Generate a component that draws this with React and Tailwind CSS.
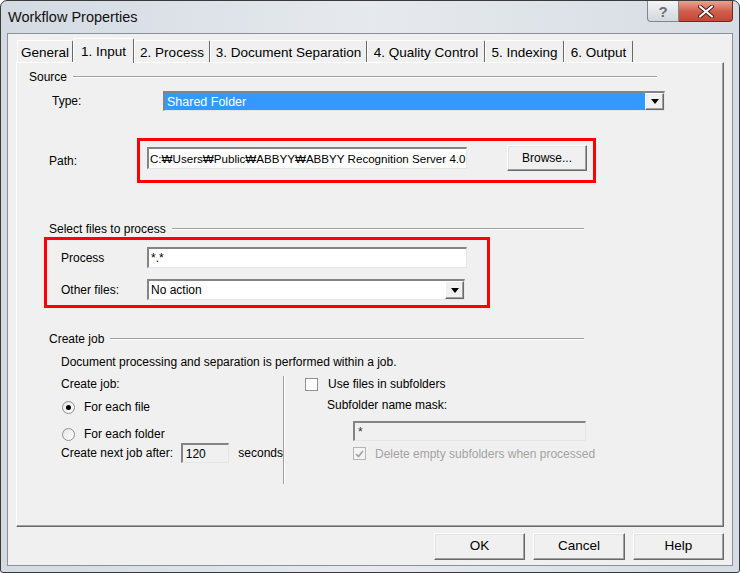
import React from 'react';

const sunken = 'border-t-2 border-l-2 border-b border-r border-t-[#848484] border-l-[#848484] border-b-[#e6e6e6] border-r-[#e6e6e6]';
const raised = 'border border-t-white border-l-white border-b-[#696969] border-r-[#696969] shadow-[inset_-1px_-1px_0_#a0a0a0]';

const GroupHeader = ({ label, width, className = '' }) => (
  <div className={`flex items-center h-[14px] ${className}`} style={{ width }}>
    <span className="text-[12px] leading-[14px] text-black">{label}</span>
    <div className="flex-1 ml-[6px] border-t border-t-[#a0a0a0] border-b border-b-white" />
  </div>
);

const DropButton = () => (
  <div className={`w-[19px] h-full flex items-center justify-center bg-[#f0f0f0] ${raised}`}>
    <svg width="8" height="5" viewBox="0 0 8 5"><path d="M0 0h8L4 5z" fill="#000" /></svg>
  </div>
);

const Button = ({ children, className = '' }) => (
  <div className={`flex items-center justify-center bg-[#f0f0f0] border border-t-white border-l-white border-b-[#696969] border-r-[#696969] shadow-[inset_-1px_-1px_0_#a0a0a0,inset_1px_1px_0_#e3e3e3] text-black ${className}`}>
    {children}
  </div>
);

const tabs = [
  { label: 'General', w: 'w-[56px]' },
  { label: '1. Input', w: 'w-[61px]', active: true },
  { label: '2. Process', w: 'w-[76px]' },
  { label: '3. Document Separation', w: 'w-[157px]' },
  { label: '4. Quality Control', w: 'w-[118px]' },
  { label: '5. Indexing', w: 'w-[79px]' },
  { label: '6. Output', w: 'w-[69px]' },
];

const App = () => (
  <div className="w-[740px] h-[573px] bg-white font-['Liberation_Sans',Arial,sans-serif]">
    <div className="w-[740px] h-[573px] flex flex-col rounded-t-[7px] rounded-b-[3px] border border-[#3a3a3a] bg-gradient-to-r from-[#d3dae2] via-[#e6eaee] to-[#d6dce3] overflow-hidden">
      {/* title bar */}
      <div className="flex h-[32px] items-start">
        <div className="pl-[7px] pt-[7px] text-[14.5px] leading-[18px] text-[#111]">Workflow Properties</div>
        <div className="ml-auto mr-[6px] flex">
          <div className="w-[32px] h-[21px] flex items-center justify-center rounded-bl-[4px] border border-t-0 border-[#80868e] bg-gradient-to-b from-[#f2f4f7] to-[#d3d8de] text-[#6a6e74] text-[15px] font-bold leading-none">?</div>
          <div className="w-[54px] h-[21px] flex items-center justify-center rounded-br-[4px] border border-t-0 border-l-0 border-[#6b2a22] bg-gradient-to-b from-[#e8a493] via-[#d0604c] to-[#c44636]">
            <svg width="16" height="13" viewBox="0 0 16 13">
              <path d="M2 1.5l12 10M14 1.5l-12 10" stroke="#4a1a14" strokeWidth="4" strokeLinecap="round" />
              <path d="M2 1.5l12 10M14 1.5l-12 10" stroke="#fff" strokeWidth="2.2" strokeLinecap="round" />
            </svg>
          </div>
        </div>
      </div>

      {/* client area */}
      <div className="mx-[6px] h-[533px] border border-[#8b9199] bg-[#f0f0f0] flex flex-col">
        {/* tabs */}
        <div className="mt-[4px] ml-[8px] h-[24px] flex items-end pl-[1px]">
          {tabs.map((t) => (
            <div
              key={t.label}
              className={
                t.active
                  ? `${t.w} h-[25px] -mb-[1px] relative z-10 bg-[#f0f0f0] border-t border-l border-t-white border-l-white border-r border-r-[#696969] rounded-t-[2px] flex justify-center pt-[5px] text-[13.5px] leading-[16px] text-black`
                  : `${t.w} h-[22px] border-t border-l border-t-white border-l-white border-r border-r-[#696969] rounded-t-[2px] flex justify-center pt-[4px] text-[13.5px] leading-[16px] text-black`
              }
            >
              {t.label}
            </div>
          ))}
        </div>

        {/* panel */}
        <div className="ml-[8px] w-[708px] h-[465px] border border-t-white border-l-white border-b-[#696969] border-r-[#696969] shadow-[inset_-1px_-1px_0_#a0a0a0] flex flex-col text-[12px] leading-[14px] text-black">
          <GroupHeader label="Source" width="628px" className="mt-[7px] ml-[12px]" />

          <div className="mt-[7px] ml-[35px] h-[20px] flex items-center">
            <div className="w-[111px]">Type:</div>
            <div className={`w-[502px] h-[20px] flex bg-white ${sunken}`}>
              <div className="flex-1 bg-[#3399ff] text-white pl-[2px] flex items-center text-[12.5px]">Shared Folder</div>
              <DropButton />
            </div>
          </div>

          <div className="mt-[27px] ml-[32px] h-[45px] flex items-center">
            <div className="w-[88px]">Path:</div>
            <div className="w-[459px] h-[45px] border-[3px] border-[#ff0000] flex items-start pl-[7px]">
              <div className={`mt-[6px] w-[320px] h-[22px] bg-white flex items-center pl-[1px] text-[11.6px] whitespace-nowrap overflow-hidden ${sunken}`}>
                C:₩Users₩Public₩ABBYY₩ABBYY Recognition Server 4.0
              </div>
              <Button className="mt-[4px] ml-[40px] w-[80px] h-[26px] text-[12px]">Browse...</Button>
            </div>
          </div>

          <GroupHeader label="Select files to process" width="535px" className="mt-[39px] ml-[32px]" />

          <div className="mt-[1px] ml-[27px] w-[446px] h-[71px] border-[3px] border-[#ff0000] flex flex-col pt-[7px] pl-[14px]">
            <div className="h-[21px] flex items-center">
              <div className="w-[86px]">Process</div>
              <div className={`w-[320px] h-[21px] bg-white pl-[2px] flex items-center ${sunken}`}>*.*</div>
            </div>
            <div className="mt-[11px] h-[21px] flex items-center">
              <div className="w-[86px]">Other files:</div>
              <div className={`w-[318px] h-[21px] bg-white flex ${sunken}`}>
                <div className="flex-1 pl-[2px] flex items-center">No action</div>
                <DropButton />
              </div>
            </div>
          </div>

          <GroupHeader label="Create job" width="535px" className="mt-[24px] ml-[32px]" />

          <div className="mt-[9px] ml-[44px] h-[14px]">Document processing and separation is performed within a job.</div>

          <div className="mt-[7px] ml-[44px] flex">
            <div className="w-[222px] flex flex-col">
              <div className="mt-[1px] h-[14px]">Create job:</div>
              <div className="mt-[9px] h-[14px] flex items-center">
                <div className="ml-[1px] w-[13px] h-[13px] rounded-full border border-[#8e8f8f] bg-gradient-to-br from-[#e6e6e6] to-white flex items-center justify-center">
                  <div className="w-[5px] h-[5px] rounded-full bg-black" />
                </div>
                <span className="ml-[9px]">For each file</span>
              </div>
              <div className="mt-[13px] h-[14px] flex items-center">
                <div className="ml-[1px] w-[13px] h-[13px] rounded-full border border-[#8e8f8f] bg-gradient-to-br from-[#e6e6e6] to-white" />
                <span className="ml-[9px]">For each folder</span>
              </div>
              <div className="mt-[2px] h-[20px] flex items-center">
                <span className="w-[121px]">Create next job after:</span>
                <div className={`w-[49px] h-[20px] bg-[#f0f0f0] pl-[3px] flex items-center ${sunken}`}>120</div>
                <span className="ml-[9px]">seconds</span>
              </div>
            </div>
            <div className="w-px h-[108px] bg-[#a0a0a0]" />
            <div className="w-px h-[108px] bg-white" />
            <div className="pl-[20px] flex flex-col">
              <div className="mt-[1px] h-[14px] flex items-center">
                <div className="w-[13px] h-[13px] border border-[#8e8f8f] bg-white" />
                <span className="ml-[10px]">Use files in subfolders</span>
              </div>
              <div className="mt-[7px] ml-[22px] h-[14px]">Subfolder name mask:</div>
              <div className={`mt-[9px] ml-[48px] w-[233px] h-[20px] bg-[#f0f0f0] pl-[3px] flex items-center text-[#333] ${sunken}`}>*</div>
              <div className="mt-[6px] ml-[48px] h-[13px] flex items-center">
                <div className="w-[13px] h-[13px] border border-[#b5b5b5] bg-[#f4f4f4] flex items-center justify-center">
                  <svg width="9" height="8" viewBox="0 0 9 8"><path d="M1 4l2.5 2.5L8 1" stroke="#a0a0a0" strokeWidth="1.6" fill="none" /></svg>
                </div>
                <span className="ml-[9px] text-[#a3a3a3]">Delete empty subfolders when processed</span>
              </div>
            </div>
          </div>
        </div>

        {/* buttons */}
        <div className="mt-[6px] mr-[8px] flex justify-end text-[13.5px]">
          <Button className="w-[91px] h-[27px]">OK</Button>
          <Button className="ml-[8px] w-[92px] h-[27px]">Cancel</Button>
          <Button className="ml-[8px] w-[91px] h-[27px]">Help</Button>
        </div>
      </div>
    </div>
  </div>
);

export default App;
